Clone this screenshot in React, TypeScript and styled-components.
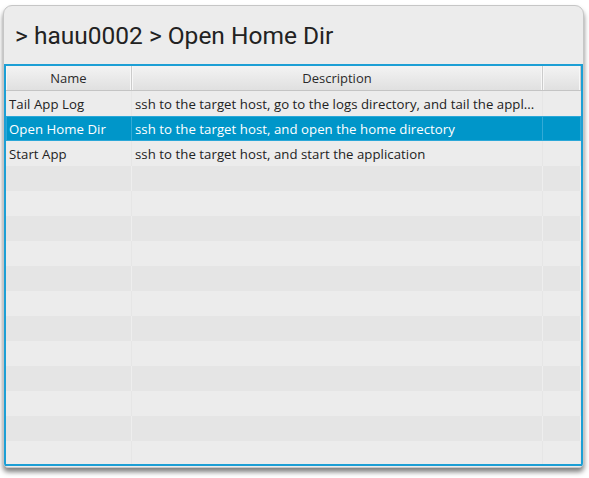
import React from "react";
import styled, { createGlobalStyle } from "styled-components";

const Global = createGlobalStyle`
  html, body { margin: 0; padding: 0; background: #ffffff; }
  body { font-family: "Open Sans", "Liberation Sans", sans-serif; }
`;

const Page = styled.div`
  padding: 5px 0 12px 3px;
`;

const Card = styled.div`
  width: 581px;
  height: 463px;
  box-sizing: border-box;
  background: #ececec;
  border: 1px solid #c6c6c6;
  border-radius: 9px 9px 5px 5px;
  box-shadow: 0 4px 5px rgba(0, 0, 0, 0.5);
  display: flex;
  flex-direction: column;
  padding-bottom: 1px;
  overflow: hidden;
`;

const Title = styled.div`
  height: 58px;
  flex: none;
  display: flex;
  align-items: center;
  padding-left: 11px;
  padding-top: 1px;
  box-sizing: border-box;
  font-family: Roboto, "Liberation Sans", sans-serif;
  font-size: 24.5px;
  color: #222222;
`;

const Table = styled.div`
  flex: 1;
  width: 579px;
  box-sizing: border-box;
  border: 2px solid #1c9fd5;
  display: flex;
  flex-direction: column;
  overflow: hidden;
  background: #ececec;
`;

const cols = "126px 411px 1fr";

const Header = styled.div`
  display: grid;
  grid-template-columns: ${cols};
  height: 25px;
  flex: none;
  box-sizing: border-box;
  background: linear-gradient(#f3f3f3, #e0e0e0);
  border-bottom: 1px solid #c4c4c4;
`;

const HeaderCell = styled.div`
  display: flex;
  align-items: center;
  justify-content: center;
  font-size: 13px;
  color: #2a2a2a;
  border-right: 1px solid #cbcbcb;
  box-shadow: inset -1px 0 0 #f7f7f7, inset 1px 0 0 #f7f7f7;
`;

const Row = styled.div<{ $alt: boolean; $selected: boolean }>`
  display: grid;
  grid-template-columns: ${cols};
  height: 25px;
  flex: none;
  box-sizing: border-box;
  background: ${(p) => (p.$selected ? "#0096c9" : p.$alt ? "#e5e5e5" : "#ececec")};
  color: ${(p) => (p.$selected ? "#ffffff" : "#222222")};
  box-shadow: ${(p) => (p.$selected ? "inset 0 0 0 1px #2ba8d8" : "none")};
`;

const Cell = styled.div<{ $alt: boolean; $selected: boolean }>`
  display: flex;
  align-items: center;
  padding-left: 3px;
  padding-right: 2px;
  font-size: 13.2px;
  letter-spacing: 0.05px;
  white-space: nowrap;
  overflow: hidden;
  min-width: 0;
  border-right: 1px solid
    ${(p) => (p.$selected ? "#33aad6" : p.$alt ? "#eeeeee" : "#e6e6e6")};
`;

const rows: [string, string][] = [
  ["Tail App Log", "ssh to the target host, go to the logs directory, and tail the appl..."],
  ["Open Home Dir", "ssh to the target host, and open the home directory"],
  ["Start App", "ssh to the target host, and start the application"],
];

export default function App() {
  const all: ([string, string] | null)[] = [];
  for (let i = 0; i < 16; i++) all.push(rows[i] ?? null);
  return (
    <Page>
      <Global />
      <Card>
        <Title>&gt; hauu0002 &gt; Open Home Dir</Title>
        <Table>
          <Header>
            <HeaderCell>Name</HeaderCell>
            <HeaderCell>Description</HeaderCell>
            <HeaderCell />
          </Header>
          {all.map((r, i) => {
            const alt = i % 2 === 1;
            const sel = i === 1;
            return (
              <Row key={i} $alt={alt} $selected={sel}>
                <Cell $alt={alt} $selected={sel}>{r ? r[0] : ""}</Cell>
                <Cell $alt={alt} $selected={sel}>{r ? r[1] : ""}</Cell>
                <Cell $alt={alt} $selected={sel} />
              </Row>
            );
          })}
        </Table>
      </Card>
    </Page>
  );
}
